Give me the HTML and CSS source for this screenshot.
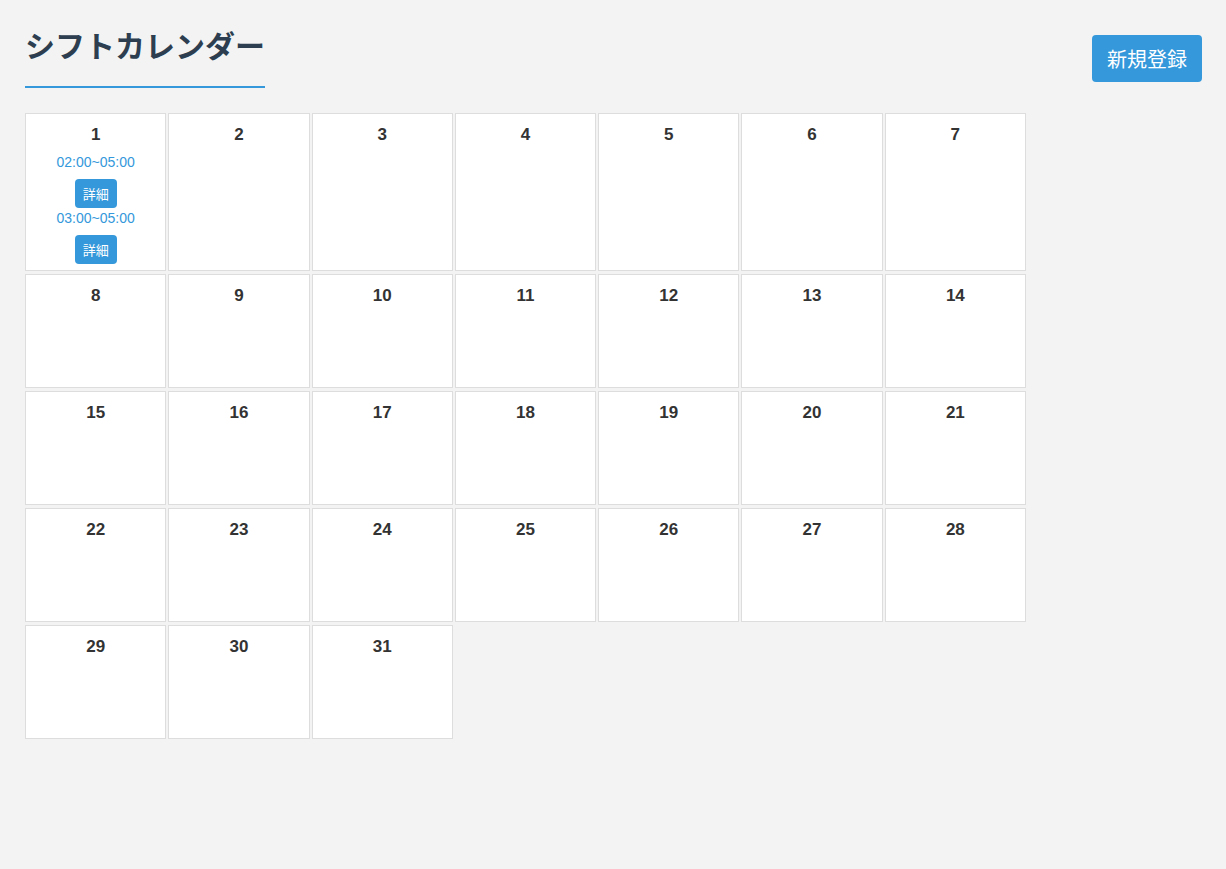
FILE: index.html
```html
<!DOCTYPE html>
<html lang="ja">
<head>
<meta charset="utf-8">
<title>シフトカレンダー</title>
<link rel="stylesheet" href="styles.css">
</head>
<body>
<div class="page">
  <header class="header">
    <h1 class="title">シフトカレンダー</h1>
    <button class="btn-new">新規登録</button>
  </header>
  <div class="calendar">
    <div class="day">
      <div class="num">1</div>
      <div class="shift"><div class="time">02:00~05:00</div><button class="btn-detail">詳細</button></div>
      <div class="shift"><div class="time">03:00~05:00</div><button class="btn-detail">詳細</button></div>
    </div>
    <div class="day"><div class="num">2</div></div>
    <div class="day"><div class="num">3</div></div>
    <div class="day"><div class="num">4</div></div>
    <div class="day"><div class="num">5</div></div>
    <div class="day"><div class="num">6</div></div>
    <div class="day"><div class="num">7</div></div>
    <div class="day"><div class="num">8</div></div>
    <div class="day"><div class="num">9</div></div>
    <div class="day"><div class="num">10</div></div>
    <div class="day"><div class="num">11</div></div>
    <div class="day"><div class="num">12</div></div>
    <div class="day"><div class="num">13</div></div>
    <div class="day"><div class="num">14</div></div>
    <div class="day"><div class="num">15</div></div>
    <div class="day"><div class="num">16</div></div>
    <div class="day"><div class="num">17</div></div>
    <div class="day"><div class="num">18</div></div>
    <div class="day"><div class="num">19</div></div>
    <div class="day"><div class="num">20</div></div>
    <div class="day"><div class="num">21</div></div>
    <div class="day"><div class="num">22</div></div>
    <div class="day"><div class="num">23</div></div>
    <div class="day"><div class="num">24</div></div>
    <div class="day"><div class="num">25</div></div>
    <div class="day"><div class="num">26</div></div>
    <div class="day"><div class="num">27</div></div>
    <div class="day"><div class="num">28</div></div>
    <div class="day"><div class="num">29</div></div>
    <div class="day"><div class="num">30</div></div>
    <div class="day"><div class="num">31</div></div>
  </div>
</div>
</body>
</html>
```

FILE: styles.css
```css
* { box-sizing: border-box; }

html, body {
  margin: 0;
  background: #f3f3f3;
}

body {
  font-family: "Liberation Sans", Arial, "Noto Sans CJK JP", sans-serif;
  color: #333;
}

.page {
  padding: 26px 24px 20px 25px;
}

.header {
  display: flex;
  justify-content: space-between;
  align-items: center;
  margin-bottom: 25px;
}

.title {
  margin: 0;
  font-family: "Noto Sans CJK JP", sans-serif;
  font-size: 30px;
  font-weight: 700;
  line-height: 36px;
  color: #2c3e50;
  padding-bottom: 24px;
  border-bottom: 2px solid #3498db;
}

.btn-new {
  margin-top: 3px;
  background: #3498db;
  color: #fff;
  border: none;
  border-radius: 4px;
  font-family: "Noto Sans CJK JP", sans-serif;
  font-size: 20px;
  line-height: 29px;
  padding: 9px 15px;
}

.calendar {
  width: 1001px;
  display: grid;
  grid-template-columns: repeat(7, 1fr);
  column-gap: 2px;
  row-gap: 3px;
}

.day {
  background: #fff;
  border: 1px solid #ddd;
  min-height: 114px;
  padding: 12px 5px 6px;
  text-align: center;
}

.num {
  font-size: 17px;
  font-weight: 700;
  line-height: 18px;
  color: #333;
  margin-bottom: 10px;
}

.shift {
  margin-top: 2px;
}

.time {
  font-size: 14px;
  line-height: 16px;
  color: #3498db;
  margin-bottom: 9px;
}

.btn-detail {
  display: inline-block;
  vertical-align: top;
  background: #3498db;
  color: #fff;
  border: none;
  border-radius: 4px;
  font-family: "Noto Sans CJK JP", sans-serif;
  font-size: 13px;
  line-height: 19px;
  padding: 5px 8px;
}
```
